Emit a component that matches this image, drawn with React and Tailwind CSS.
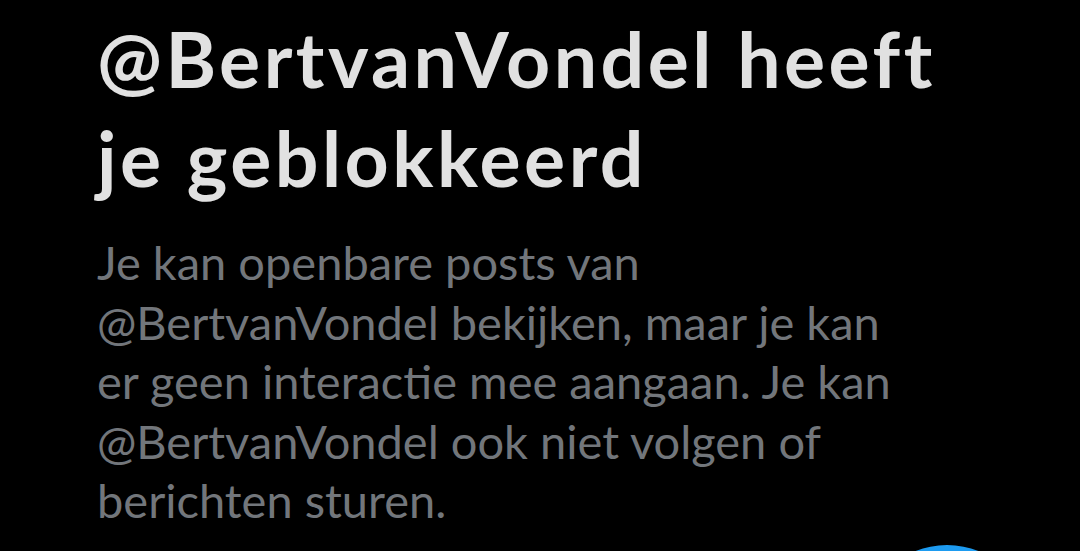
export default function App() {
    return (
        <div className="relative h-[551px] w-[1080px] overflow-hidden bg-black" style={{ fontFamily: "Lato, 'Noto Sans', sans-serif" }}>
            <div className="w-[950px] pl-[97px] pt-[9px]">
                {/* Title */}
                <h1 className="text-[77px] font-bold leading-[99px] tracking-[0.045em] text-[#e1e1e1]">
                    @BertvanVondel heeft je geblokkeerd
                </h1>

                {/* Explanation */}
                <p className="mt-[26px] w-[815px] text-[47px] leading-[59.5px] text-[#72767b]">
                    Je kan openbare posts van @BertvanVondel bekijken, maar je kan er geen interactie mee aangaan. Je kan @BertvanVondel ook niet volgen of berichten sturen.
                </p>
            </div>

            {/* Floating button peeking in at the bottom */}
            <div className="absolute left-[862px] top-[545px] h-[170px] w-[170px] rounded-full bg-[#1d9bf0]" />
        </div>
    );
}
